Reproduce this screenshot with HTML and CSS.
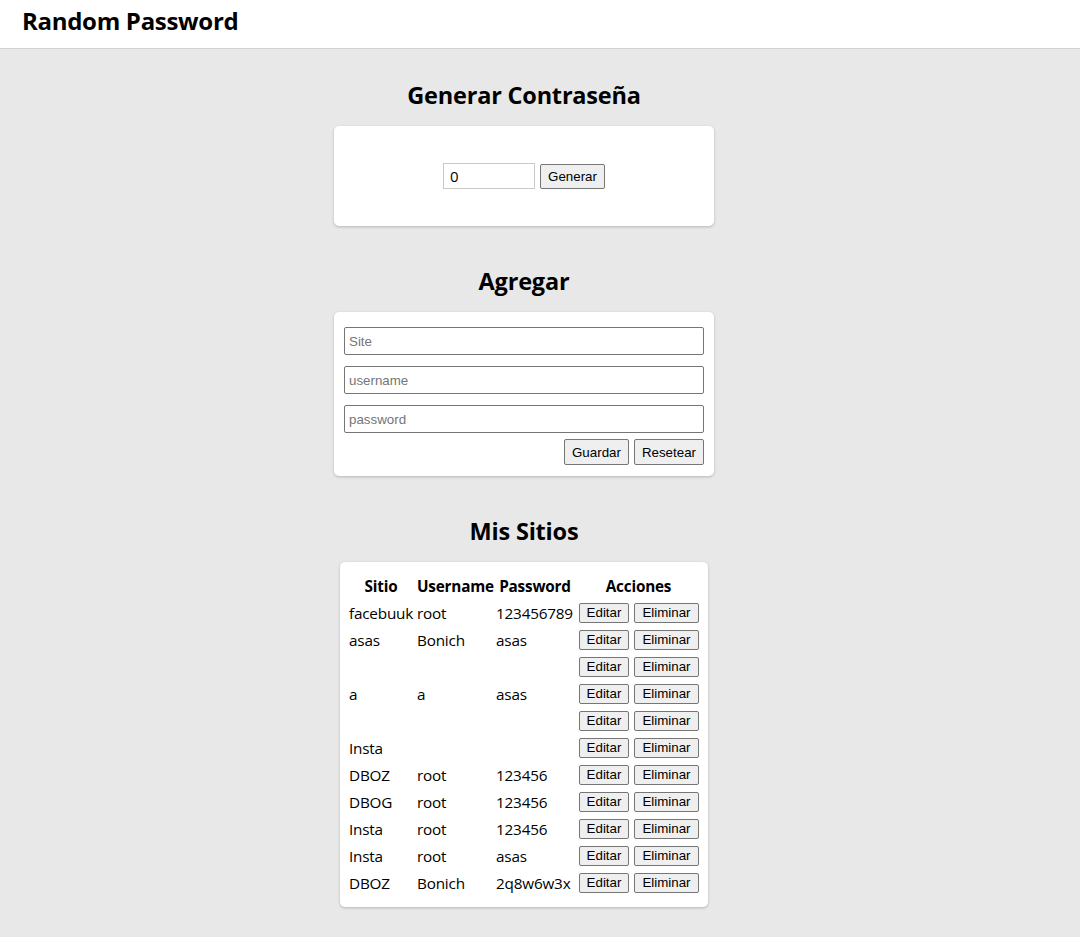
FILE: index.html
```html
<!DOCTYPE html>
<html lang="es">
<head>
<meta charset="utf-8">
<title>Random Password</title>
<link rel="stylesheet" href="styles.css">
</head>
<body>
<header class="topbar">
  <h1 class="brand">Random Password</h1>
</header>
<main class="main">
  <section class="section">
    <h2 class="section-title">Generar Contraseña</h2>
    <div class="card card-gen">
      <input class="num-input" type="text" value="0">
      <button class="btn btn-gen">Generar</button>
    </div>
  </section>
  <section class="section">
    <h2 class="section-title">Agregar</h2>
    <div class="card card-add">
      <input class="field" type="text" placeholder="Site">
      <input class="field" type="text" placeholder="username">
      <input class="field" type="text" placeholder="password">
      <div class="actions">
        <button class="btn btn-lg">Guardar</button>
        <button class="btn btn-lg">Resetear</button>
      </div>
    </div>
  </section>
  <section class="section">
    <h2 class="section-title">Mis Sitios</h2>
    <div class="card card-table">
      <table class="sites">
        <colgroup>
          <col class="c1"><col class="c2"><col class="c3"><col class="c4">
        </colgroup>
        <thead>
          <tr><th>Sitio</th><th>Username</th><th>Password</th><th>Acciones</th></tr>
        </thead>
        <tbody>
          <tr><td>facebuuk</td><td>root</td><td>123456789</td><td class="acts"><button class="btn btn-sm">Editar</button> <button class="btn btn-sm">Eliminar</button></td></tr>
          <tr><td>asas</td><td>Bonich</td><td>asas</td><td class="acts"><button class="btn btn-sm">Editar</button> <button class="btn btn-sm">Eliminar</button></td></tr>
          <tr><td></td><td></td><td></td><td class="acts"><button class="btn btn-sm">Editar</button> <button class="btn btn-sm">Eliminar</button></td></tr>
          <tr><td>a</td><td>a</td><td>asas</td><td class="acts"><button class="btn btn-sm">Editar</button> <button class="btn btn-sm">Eliminar</button></td></tr>
          <tr><td></td><td></td><td></td><td class="acts"><button class="btn btn-sm">Editar</button> <button class="btn btn-sm">Eliminar</button></td></tr>
          <tr><td>Insta</td><td></td><td></td><td class="acts"><button class="btn btn-sm">Editar</button> <button class="btn btn-sm">Eliminar</button></td></tr>
          <tr><td>DBOZ</td><td>root</td><td>123456</td><td class="acts"><button class="btn btn-sm">Editar</button> <button class="btn btn-sm">Eliminar</button></td></tr>
          <tr><td>DBOG</td><td>root</td><td>123456</td><td class="acts"><button class="btn btn-sm">Editar</button> <button class="btn btn-sm">Eliminar</button></td></tr>
          <tr><td>Insta</td><td>root</td><td>123456</td><td class="acts"><button class="btn btn-sm">Editar</button> <button class="btn btn-sm">Eliminar</button></td></tr>
          <tr><td>Insta</td><td>root</td><td>asas</td><td class="acts"><button class="btn btn-sm">Editar</button> <button class="btn btn-sm">Eliminar</button></td></tr>
          <tr><td>DBOZ</td><td>Bonich</td><td>2q8w6w3x</td><td class="acts"><button class="btn btn-sm">Editar</button> <button class="btn btn-sm">Eliminar</button></td></tr>
        </tbody>
      </table>
    </div>
  </section>
</main>
</body>
</html>
```

FILE: styles.css
```css
* { box-sizing: border-box; }

html, body {
  margin: 0;
  padding: 0;
}

body {
  background: #e8e8e8;
  font-family: "Open Sans", "Noto Sans", sans-serif;
  color: #000;
  min-height: 937px;
}

.topbar {
  background: #fff;
  height: 49px;
  border-bottom: 1px solid #d2d2d2;
  padding: 5px 22px 0;
}

.brand {
  margin: 0;
  font-size: 24px;
  line-height: 32px;
  font-weight: 700;
  letter-spacing: -0.3px;
}

.main {
  width: 1048px;
  padding-top: 30px;
  display: flex;
  flex-direction: column;
  align-items: center;
}

.section {
  display: flex;
  flex-direction: column;
  align-items: center;
  margin-bottom: 39px;
}

.section-title {
  margin: 0 0 15px;
  font-size: 23.5px;
  line-height: 32px;
  font-weight: 700;
  letter-spacing: -0.2px;
}

.card {
  background: #fff;
  border-radius: 5px;
  box-shadow: 0 1px 3px rgba(0, 0, 0, 0.22);
}

.card-gen {
  width: 380px;
  height: 100px;
  display: flex;
  align-items: center;
  justify-content: center;
  gap: 5px;
}

.num-input {
  width: 92px;
  height: 26px;
  border: 1px solid #c9c9c9;
  border-radius: 0;
  padding: 0 6px;
  font-family: "Open Sans", sans-serif;
  font-size: 15px;
  color: #000;
  outline: none;
}

.btn {
  font-family: "Liberation Sans", Arial, sans-serif;
  font-size: 13.33px;
  color: #000;
  background: #efefef;
  border: 1px solid #767676;
  border-radius: 2px;
  padding: 0 7px;
  cursor: pointer;
}

.btn-gen {
  height: 25px;
  width: 65px;
}

.card-add {
  width: 380px;
  padding: 15px 10px 11px;
  display: flex;
  flex-direction: column;
  gap: 11px;
}

.field {
  width: 360px;
  height: 28px;
  border: 1px solid #767676;
  border-radius: 2px;
  padding: 0 4px;
  font-family: "Liberation Sans", Arial, sans-serif;
  font-size: 13.33px;
  outline: none;
}

.field::placeholder {
  color: #757575;
}

.actions {
  display: flex;
  justify-content: flex-end;
  gap: 5px;
  margin-top: -5px;
}

.btn-lg {
  height: 26px;
}

.card-table {
  padding: 10px 6px 10px;
}

.sites {
  width: 356px;
  table-layout: fixed;
  border-collapse: separate;
  border-spacing: 2px;
  font-size: 15.3px;
}

.c1 { width: 66px; }
.c2 { width: 77px; }
.c3 { width: 80px; }
.c4 { width: 123px; }

.sites th {
  font-weight: 700;
  text-align: center;
  padding: 1px;
  height: 24px;
  white-space: nowrap;
  letter-spacing: -0.2px;
}

.sites td {
  padding: 1px;
  height: 25px;
  text-align: left;
  white-space: nowrap;
  letter-spacing: -0.2px;
}

.sites td.acts {
  display: flex;
  gap: 5px;
  align-items: center;
  font-size: 0;
  padding-left: 2px;
}

.btn-sm {
  height: 20px;
  font-size: 13.33px;
  line-height: 18px;
  padding: 0 6px;
}
.btn-sm:first-child { width: 50px; }
.btn-sm:last-child { width: 65px; }
```
